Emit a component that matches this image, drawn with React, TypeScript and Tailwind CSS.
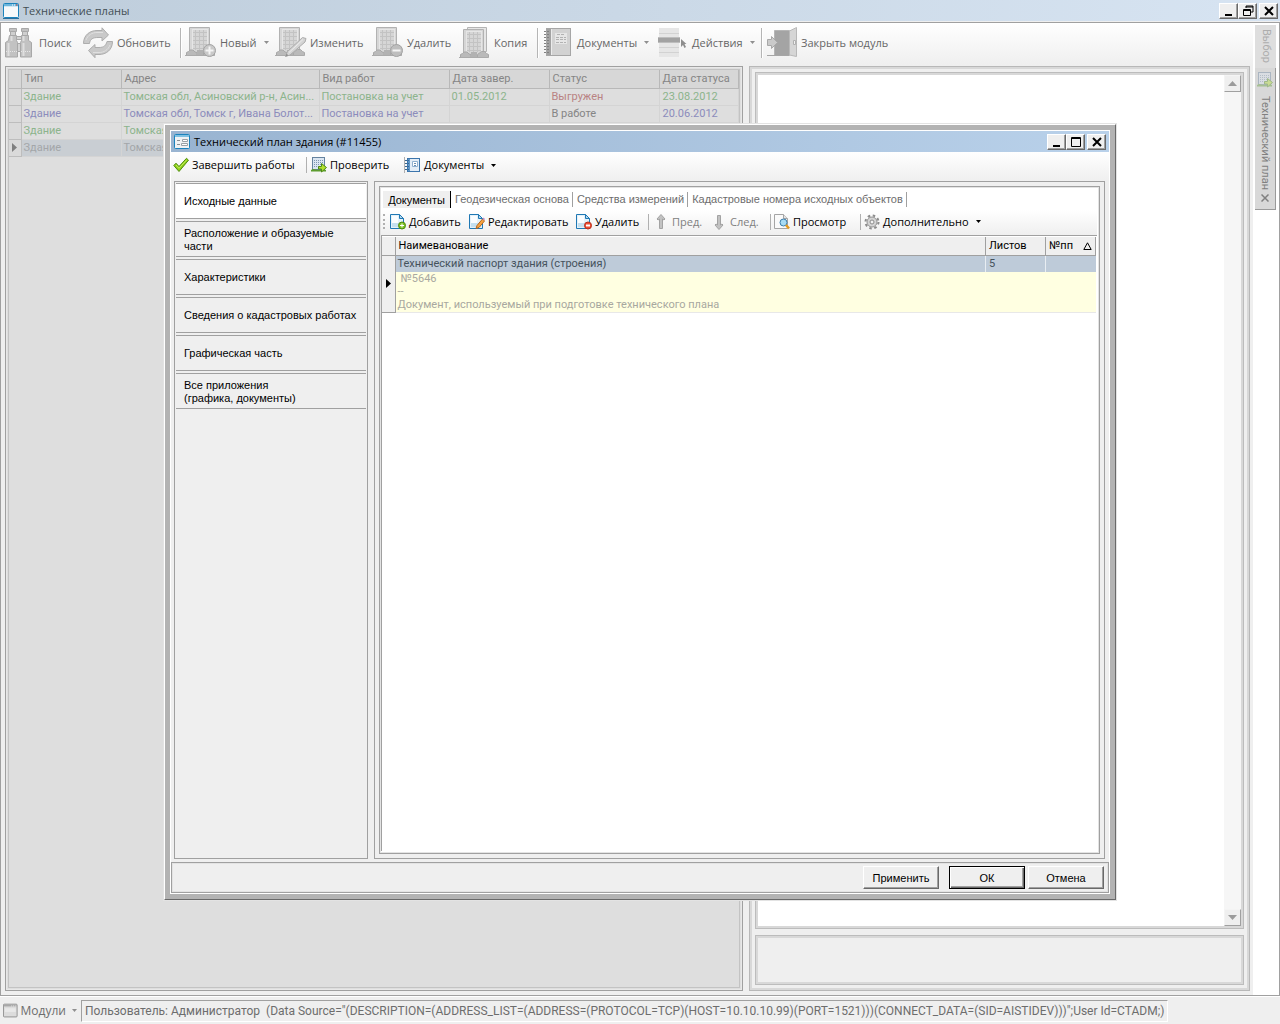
import type { ReactNode } from "react";

type Kids = { children?: ReactNode };

/* ---------- icons: main window ---------- */

const WindowIcon = () => (
  <svg width="16" height="16" viewBox="0 0 16 16" aria-hidden="true">
    <rect x="0.5" y="0.5" width="15" height="14" rx="1" fill="#f7f9fb" stroke="#1b83bd" />
    <rect x="1" y="1" width="14" height="2" fill="#6db6dc" />
    <rect x="1" y="3" width="14" height="1" fill="#cfe6f3" />
    <path d="M9 2h1M11 2h1" stroke="#fff" />
    <path d="M13 2h1.500" stroke="#d3392a" />
    <path d="M0 15.500h16" stroke="#2b6f9c" />
  </svg>
);

const FormIcon = () => (
  <svg width="16" height="16" viewBox="0 0 16 16" aria-hidden="true">
    <rect x="0.5" y="0.5" width="15" height="14" rx="1" fill="#f0f2f4" stroke="#1b83bd" />
    <rect x="1" y="1" width="14" height="2" fill="#7fc1e2" />
    <path d="M3 6.500h3M3 10.500h3" stroke="#8b8f93" />
    <path d="M8.500 5.500h5v2h-5zM7.500 9.500h6v2h-6z" fill="#fff" stroke="#9aa0a5" />
  </svg>
);

const Binoculars = () => (
  <svg width="32" height="32" viewBox="0 0 32 32" aria-hidden="true">
    <g fill="#c2c2c2" stroke="#a8a8a8">
      <path d="M5.500 1.500h7v3h-7zM17.500 1.500h7v3h-7z" />
      <path d="M6.500 4.500h5v4h-5zM18.500 4.500h5v4h-5z" fill="#cfcfcf" />
      <path d="M5.500 8.500h7v5l1 2v14.500h-12V15.500l3-2zM17.500 8.500h7v5l3 2v14.500h-11V15.500l1-2z" />
      <path d="M12.500 9.500h5v3h-5zM13.500 16.500h3v8h-3z" fill="#d2d2d2" />
    </g>
    <path d="M7.500 9v5M19.500 9v5M4.500 16v13M19.500 16v13" stroke="#dedede" strokeWidth="2" />
    <path d="M2 24.500h11M17 24.500h10" stroke="#e6e6e6" strokeDasharray="1 1" />
  </svg>
);

const Refresh = () => (
  <svg width="32" height="32" viewBox="0 0 32 32" aria-hidden="true">
    <g fill="#c9c9c9" stroke="#adadad" strokeLinejoin="round">
      <path d="M1.500 16.500C1.500 8 8 3.500 15 3.500h5V.8l6.500 7.200-6.500 6v-3.500h-4C11 10.500 8 12 7.500 16.500z" />
      <path d="M30.500 14.500C30.500 23 24 27.500 17 27.500h-4v3.200L6.500 23.500 13 17.500v3h4c5 0 7-2 8-6z" />
    </g>
    <path d="M4 13c2-5 6-7.500 11-7.500h6M28 18c-2 5-6 7.500-11 7.500h-6" fill="none" stroke="#e0e0e0" />
  </svg>
);

const Building = ({ children, dx = 0 }: Kids & { dx?: number }) => (
  <svg width="32" height="32" viewBox="0 0 32 32" aria-hidden="true">
    {dx > 0 && <path d="M8.500.5h19v24h-19z" fill="#e6e6e6" stroke="#b4b4b4" />}
    <g transform={dx > 0 ? "translate(0 2)" : undefined}>
      <path d="M4.500.5h20v27h-20z" fill="#d6d6d6" stroke="#b2b2b2" />
      <path d="M7 5.500h15M7 9.500h15M7 13.500h15M7 17.500h15M7 21.500h15M10.500 3v20M14.500 3v20M18.500 3v20" stroke="#c3c3c3" />
      <path d="M7.500 3v20M22.500 3v20M7 2.500h16" stroke="#e6e6e6" />
      <path d="M1.500 28.500v-3l2-1 1.500-1.500h3l2 2 2 .5v3z" fill="#bababa" stroke="#a8a8a8" />
      <path d="M12 23h6v5.500h-6z" fill="#b2b2b2" />
      <path d="M18.500 28.500v-3l2-1.500 2-1.500h3l2 2 2 1v3z" fill="#bababa" stroke="#a8a8a8" />
      <path d="M0 28.500h29" stroke="#ababab" />
    </g>
    {children}
  </svg>
);

const BuildingNew = () => (
  <Building>
    <circle cx="24.500" cy="23.500" r="6" fill="#c9c9c9" stroke="#a2a2a2" />
    <path d="M24.500 19.500v8M20.500 23.500h8" stroke="#f4f4f4" strokeWidth="2" />
  </Building>
);
const BuildingEdit = () => (
  <Building>
    <path d="M10.500 29.500l2-5 15-14 3.500 1-1 3.500-15 13z" fill="#d4d4d4" stroke="#acacac" />
    <path d="M14 25.500l14-13" stroke="#ebebeb" />
    <path d="M10.500 29.500l1-3 2 2z" fill="#909090" />
  </Building>
);
const BuildingDelete = () => (
  <Building>
    <circle cx="24.500" cy="23.500" r="6" fill="#bebebe" stroke="#a2a2a2" />
    <path d="M20.500 23.500h8" stroke="#f4f4f4" strokeWidth="2" />
  </Building>
);
const BuildingCopy = () => <Building dx={4} />;

const Notebook = () => (
  <svg width="32" height="32" viewBox="0 0 32 32" aria-hidden="true">
    <rect x="4.500" y="1.500" width="24" height="27" fill="#d2d2d2" stroke="#a6a6a6" />
    <path d="M5 2h4v26H5z" fill="#a2a2a2" />
    <path d="M9.500 2v26" stroke="#ebebeb" />
    <path d="M2 4.500h5M2 7.500h5M2 10.500h5M2 13.500h5M2 16.500h5M2 19.500h5M2 22.500h5M2 25.500h5" stroke="#808080" strokeDasharray="2 1" />
    <rect x="13" y="6" width="12" height="11" fill="#e6e6e6" />
    <path d="M15 7.500h8M14 10.500h10M14 12.500h10M14 15.500h10" stroke="#b2b2b2" strokeDasharray="3 1" />
  </svg>
);

const ListCursor = () => (
  <svg width="32" height="32" viewBox="0 0 32 32" aria-hidden="true">
    <path d="M2 1h20v29H2z" fill="#e6e6e6" />
    <path d="M2 6.500h20M2 20.500h20M2 25.500h20" stroke="#d2d2d2" />
    <path d="M1 10h22v6H1z" fill="#a2a2a2" />
    <path d="M1 10.500h22M1 15.500h22" stroke="#bdbdbd" />
    <path d="M24 12v8l2-2 1.500 3 1.500-1-1.500-3h2z" fill="#8e8e8e" />
  </svg>
);

const ExitDoor = () => (
  <svg width="32" height="32" viewBox="0 0 32 32" aria-hidden="true">
    <path d="M8.500 3.500h15v25h-15z" fill="#a4a4a4" stroke="#b5b5b5" />
    <path d="M23.500 4l7-3.500v29l-7-1.500z" fill="#d6d6d6" stroke="#b8b8b8" />
    <path d="M27.500 13.500h2v4h-2z" fill="#f1f1f1" stroke="#b0b0b0" />
    <path d="M1 28.500h22" stroke="#a6a6a6" />
    <path d="M1.500 12.500h4V9.500l6 6-6 6v-3h-4z" fill="#cacaca" stroke="#a8a8a8" />
  </svg>
);

/* ---------- icons: dialog ---------- */

const Check = () => (
  <svg width="16" height="16" viewBox="0 0 16 16" aria-hidden="true">
    <path d="M.8 8.500L3 6.200l3 3.300 7.500-8.200 2 1.900L6 14.500z" fill="#8fd017" stroke="#4f8c10" strokeLinejoin="round" />
    <path d="M3 8l3 3.300 7.500-8.200" fill="none" stroke="#c4ee5b" />
  </svg>
);

const CheckPlan = ({ muted = false }: { muted?: boolean }) => (
  <svg width="16" height="16" viewBox="0 0 16 16" className={muted ? "opacity-40" : ""} aria-hidden="true">
    <rect x="1.500" y="0.500" width="12" height="12" fill="#dbe6f2" stroke="#66839f" />
    <path d="M3 3.500h9M3 5.500h9M3 7.500h9M3 9.500h9" stroke="#7d95b0" strokeDasharray="1 1" />
    <path d="M0 14.500h15v-1.500l-3-1-3 1-4-.5-3-.5-2 1z" fill="#5d9c2f" />
    <path d="M7.500 9.500h3V6.500l5 4-5 4.500v-3h-3z" fill="#b3e02e" stroke="#4c8a18" />
  </svg>
);

const BlueNotebook = () => (
  <svg width="16" height="16" viewBox="0 0 16 16" aria-hidden="true">
    <rect x="2.500" y="1.500" width="12" height="13" fill="#e3edf7" stroke="#3c75ac" />
    <path d="M3 2h2v12H3z" fill="#5e97c9" />
    <path d="M0 3.500h4M0 6.500h4M0 9.500h4M0 12.500h4" stroke="#3a678f" strokeDasharray="2 1" />
    <path d="M7.500 4.500h5v5h-5z" fill="#fff" stroke="#8fb0d0" />
    <path d="M9 6.500h2M9 8.500h2" stroke="#6b8fb4" />
  </svg>
);

const Page = ({ children }: Kids) => (
  <svg width="16" height="16" viewBox="0 0 16 16" aria-hidden="true">
    <path d="M.5.5h9l4 4v10H.5z" fill="#e4f1f9" stroke="#1f78b4" />
    <path d="M2 2h6v11H2z" fill="#fafdff" />
    <path d="M2 9h10v4H2z" fill="#c4e0f0" />
    <path d="M9.500.5v4h4z" fill="#b3d7ee" stroke="#1f78b4" strokeLinejoin="round" />
    {children}
  </svg>
);
const PageAdd = () => (
  <Page>
    <circle cx="12" cy="11.500" r="3.500" fill="#7cc120" stroke="#4b8a0e" />
    <path d="M12 9.500v4M10 11.500h4" stroke="#fff" />
  </Page>
);
const PageEdit = () => (
  <Page>
    <path d="M7 14.500l1-3L13.500 5l2 2L10 13.500z" fill="#f6a440" stroke="#b5651d" />
    <path d="M13.500 5l1-1.500 1.500 1.500-1 1.500z" fill="#c08ac0" />
  </Page>
);
const PageDelete = () => (
  <Page>
    <circle cx="12" cy="11.500" r="3.500" fill="#ee4b32" stroke="#b5301c" />
    <path d="M10 11.500h4" stroke="#fff" strokeWidth="2" />
  </Page>
);
const Preview = () => (
  <svg width="16" height="16" viewBox="0 0 16 16" aria-hidden="true">
    <path d="M.5.5h9l4 4v10H.5z" fill="#fafafa" stroke="#a5a5a5" />
    <path d="M9.500.5v4h4" fill="#e5e5e5" stroke="#a5a5a5" />
    <circle cx="9.500" cy="8.500" r="3.500" fill="#a8dcf4" stroke="#3c7fae" />
    <path d="M12 11l3 3.500" stroke="#e39a1f" strokeWidth="2.500" />
  </svg>
);
const Arrow = ({ down = false }: { down?: boolean }) => (
  <svg width="16" height="16" viewBox="0 0 16 16" className={down ? "rotate-180" : ""} aria-hidden="true">
    <path d="M8 .5l4 4.500-1 1-1.500-1v9.500h-3V5L5 6 4 5z" fill="#c2c2c2" stroke="#a3a3a3" strokeLinejoin="round" />
  </svg>
);
const Gear = () => (
  <svg width="16" height="16" viewBox="0 0 16 16" aria-hidden="true">
    <circle cx="8" cy="8" r="6.500" fill="none" stroke="#8c8c8c" strokeWidth="2" strokeDasharray="2.500 2.600" />
    <circle cx="8" cy="8" r="5" fill="#d4d4d4" stroke="#949494" />
    <circle cx="8" cy="8" r="2" fill="#f3f3f3" stroke="#8c8c8c" />
  </svg>
);
const ModulesIcon = () => (
  <svg width="16" height="16" viewBox="0 0 16 16" aria-hidden="true">
    <rect x="0.500" y="0.500" width="15" height="14" rx="1" fill="#dcdcdc" stroke="#8e8e8e" />
    <rect x="1" y="1" width="14" height="2" fill="#a9a9a9" />
    <path d="M9 2.500h5" stroke="#e8e8e8" strokeDasharray="1 1" />
    <path d="M2 5h12v4H2z" fill="#e9e9e9" />
  </svg>
);

/* ---------- small controls ---------- */

const Caret = ({ className = "text-[#8f8f8f]" }: { className?: string }) => (
  <svg width="5" height="3" viewBox="0 0 5 3" className={className} aria-hidden="true">
    <path d="M0 0h5L2.500 3z" fill="currentColor" />
  </svg>
);

const WinButton = ({ label, children }: Kids & { label: string }) => (
  <button
    aria-label={label}
    className="flex h-4 w-[19px] items-center justify-center border border-t-white border-l-white border-r-[#696969] border-b-[#696969] bg-[#efefef] shadow-[inset_-1px_-1px_0_#a0a0a0]"
  >
    <svg width="12" height="12" viewBox="0 0 12 12" aria-hidden="true">
      {children}
    </svg>
  </button>
);

const Minimize = () => (
  <WinButton label="Свернуть">
    <path d="M2 9h7v2H2z" />
  </WinButton>
);
const Close = () => (
  <WinButton label="Закрыть">
    <path d="M2 2l8 8M10 2l-8 8" stroke="#000" strokeWidth="2" />
  </WinButton>
);

const Sep = () => <div className="mr-1 h-[30px] w-px shrink-0 bg-[#b5b5b5] shadow-[1px_0_0_#fff]" />;
const SmallSep = () => <div className="h-4 w-px shrink-0 bg-[#b0b0b0]" />;

const BigTool = ({ icon, label, width, menu }: { icon: ReactNode; label: string; width: string; menu?: boolean }) => (
  <button className={`flex shrink-0 items-center gap-[3px] whitespace-nowrap ${width}`}>
    {icon}
    <span>{label}</span>
    {menu && (
      <span className="ml-1">
        <Caret />
      </span>
    )}
  </button>
);

const Tool = ({ icon, label, width, menu, disabled }: { icon: ReactNode; label: string; width: string; menu?: boolean; disabled?: boolean }) => (
  <button
    disabled={disabled}
    className={`flex shrink-0 items-center gap-[3px] whitespace-nowrap disabled:text-[#808080] ${width}`}
  >
    {icon}
    <span>{label}</span>
    {menu && (
      <span className="ml-1">
        <Caret className="text-black" />
      </span>
    )}
  </button>
);

/* ---------- data ---------- */

const plans = [
  { type: "Здание", addr: "Томская обл, Асиновский р-н, Асин...", work: "Постановка на учет", done: "01.05.2012", status: "Выгружен", date: "23.08.2012", tone: "text-[#8cb48c]", statusTone: "text-[#b98383]" },
  { type: "Здание", addr: "Томская обл, Томск г, Ивана Болот...", work: "Постановка на учет", done: "", status: "В работе", date: "20.06.2012", tone: "text-[#8c8cbc]", statusTone: "text-[#858585]" },
  { type: "Здание", addr: "Томская", work: "", done: "", status: "", date: "", tone: "text-[#8cb48c]", statusTone: "text-[#858585]" },
  { type: "Здание", addr: "Томская", work: "", done: "", status: "", date: "", tone: "text-[#a3a6a9]", statusTone: "text-[#858585]", current: true },
];
const planColumns = ["Тип", "Адрес", "Вид работ", "Дата завер.", "Статус", "Дата статуса"];

const sections = [
  "Исходные данные",
  "Расположение и образуемые\nчасти",
  "Характеристики",
  "Сведения о кадастровых работах",
  "Графическая часть",
  "Все приложения\n(графика, документы)",
];
const tabs = ["Геодезическая основа", "Средства измерений", "Кадастровые номера исходных объектов"];

/* ---------- main window parts ---------- */

const MainToolbar = () => (
  <div role="toolbar" aria-label="Главная панель" className="flex h-[42px] shrink-0 items-center overflow-hidden bg-linear-to-b from-white to-[#efefef] pb-[3px] pl-[3px] text-[#666]">
    <BigTool icon={<Binoculars />} label="Поиск" width="w-[78px]" />
    <BigTool icon={<Refresh />} label="Обновить" width="w-[98px]" />
    <Sep />
    <BigTool icon={<BuildingNew />} label="Новый" width="w-[90px]" menu />
    <BigTool icon={<BuildingEdit />} label="Изменить" width="w-[97px]" />
    <BigTool icon={<BuildingDelete />} label="Удалить" width="w-[87px]" />
    <BigTool icon={<BuildingCopy />} label="Копия" width="w-[78px]" />
    <Sep />
    <BigTool icon={<Notebook />} label="Документы" width="w-[115px]" menu />
    <BigTool icon={<ListCursor />} label="Действия" width="w-[104px]" menu />
    <Sep />
    <BigTool icon={<ExitDoor />} label="Закрыть модуль" width="w-[130px]" />
  </div>
);

const PlansTable = () => (
  <section className="min-w-0 flex-[733_1_0] overflow-hidden border border-[#a0a0a0] bg-[#dedede] p-[2px] shadow-[inset_0_0_0_1px_#e8e8e8]">
    <div className="h-full border border-[#c3c3c3]">
      <table className="w-full table-fixed border-collapse text-left font-[Roboto] text-[11px] leading-[15px]">
        <colgroup>
          <col className="w-[12px]" />
          <col className="w-[100px]" />
          <col className="w-[198px]" />
          <col className="w-[130px]" />
          <col className="w-[100px]" />
          <col className="w-[110px]" />
          <col />
        </colgroup>
        <thead className="text-[#858585]">
          <tr className="h-[18px] bg-[#d7d7d7]">
            <th className="border-r border-b border-[#b8b8b8]" />
            {planColumns.map((c) => (
              <th key={c} className="truncate border-r border-b border-[#b8b8b8] pl-[3px] font-normal">
                {c}
              </th>
            ))}
          </tr>
        </thead>
        <tbody>
          {plans.map((p, i) => (
            <tr key={i} className={`h-[17px] ${p.tone} ${p.current ? "bg-[#c9ced3]" : ""}`}>
              <td className="border-r border-b border-[#bdbdbd] bg-[#dadada]">
                {p.current && (
                  <svg width="5" height="9" viewBox="0 0 5 9" className="mx-auto" aria-hidden="true">
                    <path d="M0 0l5 4.500L0 9z" fill="#808080" />
                  </svg>
                )}
              </td>
              {[p.type, p.addr, p.work, p.done].map((v, k) => (
                <td key={k} className="overflow-hidden border-r border-b border-[#d4d4d4] pl-[2px] whitespace-nowrap">
                  {v}
                </td>
              ))}
              <td className={`border-r border-b border-[#d4d4d4] pl-[2px] ${p.statusTone}`}>{p.status}</td>
              <td className="border-r border-b border-[#d4d4d4] pl-[3px]">{p.date}</td>
            </tr>
          ))}
        </tbody>
      </table>
    </div>
  </section>
);

const ScrollButton = ({ down = false }: { down?: boolean }) => (
  <button
    aria-label={down ? "Вниз" : "Вверх"}
    className="flex h-[17px] w-[17px] items-center justify-center border border-t-[#f4f4f4] border-l-[#f4f4f4] border-r-[#a0a0a0] border-b-[#a0a0a0] bg-[#efefef]"
  >
    <svg width="9" height="5" viewBox="0 0 9 5" className={down ? "rotate-180" : ""} aria-hidden="true">
      <path d="M0 5l4.500-5L9 5z" fill="#9b9b9b" />
    </svg>
  </button>
);

const DetailsPane = () => (
  <section className="flex min-w-0 flex-[490_1_0] flex-col gap-[6px] border border-[#b8b8b8] p-[5px] shadow-[inset_0_0_0_2px_#d8d8d8]">
    <div className="flex min-h-0 flex-1 border border-[#bcbcbc] bg-white p-[2px] shadow-[inset_0_0_0_2px_#d8d8d8]">
      <textarea aria-label="Описание" readOnly className="min-w-0 flex-1 resize-none outline-none" />
      <div className="flex w-[17px] flex-col justify-between bg-[#f6f6f6]">
        <ScrollButton />
        <ScrollButton down />
      </div>
    </div>
    <div className="h-[50px] shrink-0 border border-[#bcbcbc] bg-[#efefef] shadow-[inset_0_0_0_2px_#d8d8d8]" />
  </section>
);

const SideTabs = () => (
  <nav aria-label="Окна" className="w-[26px] shrink-0 bg-white pt-[2px] pl-[2px] font-[Roboto] text-[11px]">
    <div className="flex w-[21px] flex-col">
      <button className="h-[43px] bg-[#dedede] pt-1 text-left text-[#adadad] [writing-mode:vertical-rl]">Выбор</button>
      <div className="flex h-[142px] flex-col items-center border-r border-b border-[#9a9a9a] bg-[#d8d8d8] pt-1 text-[#808080]">
        <CheckPlan muted />
        <button className="mt-2 h-[94px] text-left whitespace-nowrap [writing-mode:vertical-rl]">Технический план</button>
        <button aria-label="Закрыть вкладку" className="mt-1">
          <svg width="8" height="8" viewBox="0 0 8 8" aria-hidden="true">
            <path d="M.5.5l7 7M7.500.5l-7 7" stroke="#808080" strokeWidth="1.500" />
          </svg>
        </button>
      </div>
    </div>
  </nav>
);

/* ---------- dialog ---------- */

const DialogButton = ({ children, primary = false }: Kids & { primary?: boolean }) => (
  <button
    className={`flex h-[23px] w-[76px] items-center justify-center border bg-[#efefef] ${
      primary
        ? "border-black shadow-[inset_1px_1px_0_#fff,inset_-1px_-1px_0_#696969,inset_-2px_-2px_0_#a0a0a0]"
        : "border-t-white border-l-white border-r-[#696969] border-b-[#696969] shadow-[inset_-1px_-1px_0_#a0a0a0]"
    }`}
  >
    {children}
  </button>
);

const DocumentsPane = () => (
  <div className="flex min-h-0 flex-1 flex-col border border-[#a0a0a0] bg-white p-px pr-[2px] pb-[2px] shadow-[inset_0_0_0_1px_#e3e3e3]">
    <div role="tablist" className="flex h-[22px] shrink-0 items-center pt-px pl-[2px] font-['Liberation_Sans'] text-[#6d6d6d]">
      <button role="tab" aria-selected="true" className="h-[17px] w-[68px] shrink-0 border-r border-black bg-[#efefef] text-black">
        Документы
      </button>
      {tabs.map((t) => (
        <button key={t} role="tab" aria-selected="false" className="h-[15px] border-r border-[#a0a0a0] pr-[3px] pl-1 leading-[15px] whitespace-nowrap">
          {t}
        </button>
      ))}
    </div>
    <div role="toolbar" aria-label="Документы" className="flex h-[25px] shrink-0 items-center bg-linear-to-b from-white to-[#efefef] pb-[2px] pl-[2px]">
      <div className="mr-[5px] h-[15px] w-[2px] border-l-2 border-dotted border-[#b0b0b0]" />
      <Tool icon={<PageAdd />} label="Добавить" width="w-[79px]" />
      <Tool icon={<PageEdit />} label="Редактировать" width="w-[107px]" />
      <Tool icon={<PageDelete />} label="Удалить" width="w-[72px]" />
      <SmallSep />
      <Tool icon={<Arrow />} label="Пред." width="w-[62px] pl-1" disabled />
      <Tool icon={<Arrow down />} label="След." width="w-[59px]" disabled />
      <SmallSep />
      <Tool icon={<Preview />} label="Просмотр" width="w-[89px] pl-[3px]" />
      <SmallSep />
      <Tool icon={<Gear />} label="Дополнительно" width="w-[130px] pl-[3px]" menu />
    </div>
    <div className="min-h-0 flex-1 border-t border-l border-[#a0a0a0] pt-px pr-px">
      <table className="w-full table-fixed border-collapse text-left font-[Roboto]">
        <colgroup>
          <col className="w-[13px]" />
          <col />
          <col className="w-[60px]" />
          <col className="w-[50px]" />
        </colgroup>
        <thead>
          <tr className="h-[18px] bg-[#efefef]">
            <th className="border-r border-b border-[#a0a0a0]" />
            <th className="border-r border-b border-[#a0a0a0] px-[3px] font-normal">Наимеванование</th>
            <th className="border-r border-b border-[#a0a0a0] px-[3px] font-normal">Листов</th>
            <th className="border-r border-b border-[#a0a0a0] px-[3px] font-normal">
              <span className="flex items-center justify-between">
                №пп
                <svg width="9" height="8" viewBox="0 0 9 8" aria-hidden="true">
                  <path d="M.8 7.500L4.500.8l3.700 6.700z" fill="none" stroke="#000" />
                </svg>
              </span>
            </th>
          </tr>
        </thead>
        <tbody>
          <tr className="h-[17px] bg-[#becbd9] text-[#45525c]">
            <td rowSpan={2} className="border-r border-b border-[#a0a0a0] bg-[#efefef]">
              <svg width="5" height="9" viewBox="0 0 5 9" className="mx-auto" aria-hidden="true">
                <path d="M0 0l5 4.500L0 9z" />
              </svg>
            </td>
            <td className="border-r border-[#e8edf2] px-[2px]">Технический паспорт здания (строения)</td>
            <td className="border-r border-[#e8edf2] px-[3px]">5</td>
            <td />
          </tr>
          <tr className="bg-[#ffffe1] text-[#a8a8a0]">
            <td colSpan={3} className="h-[40px] border-b border-[#e8e8e8] px-[2px] align-top leading-[13px]">
              <p className="pl-[3px]">№5646</p>
              <p>--</p>
              <p>Документ, используемый при подготовке технического плана</p>
            </td>
          </tr>
        </tbody>
      </table>
    </div>
  </div>
);

const PlanDialog = () => (
  <div
    role="dialog"
    aria-label="Технический план здания (#11455)"
    className="absolute inset-x-[164px] inset-y-[124px] flex flex-col border border-t-white border-l-white border-r-[#696969] border-b-[#696969] bg-[#b3b3b3] p-[5px] text-[11px] text-black shadow-[0_0_0_1px_#e3e3e3]"
  >
    <div className="flex min-h-0 flex-1 flex-col border border-white bg-[#efefef]">
      <header className="flex h-[21px] shrink-0 items-center gap-1 bg-linear-to-r from-[#99b4d1] to-[#b9d1ea] pr-[3px] pl-[3px]">
        <FormIcon />
        <h2 className="flex-1">Технический план здания (#11455)</h2>
        <div className="flex">
          <Minimize />
          <WinButton label="Развернуть">
            <path d="M1.500 1.500h9v9h-9zM1 2.500h10" fill="none" stroke="#000" />
          </WinButton>
          <div className="w-[2px]" />
          <Close />
        </div>
      </header>
      <div role="toolbar" aria-label="Технический план" className="flex h-[29px] shrink-0 items-center bg-linear-to-b from-white to-[#efefef] pb-[3px] pl-[2px]">
        <Tool icon={<Check />} label="Завершить работы" width="w-[133px]" />
        <SmallSep />
        <Tool icon={<CheckPlan />} label="Проверить" width="w-[97px] pl-1" />
        <SmallSep />
        <Tool icon={<BlueNotebook />} label="Документы" width="w-[100px]" menu />
      </div>
      <div className="flex min-h-0 flex-1 gap-[6px] pr-1 pl-[3px]">
        <nav aria-label="Разделы" className="flex w-[194px] shrink-0 flex-col gap-[2px] border border-[#a0a0a0] p-px font-['Liberation_Sans'] leading-[13px]">
          {sections.map((s, i) => (
            <button
              key={s}
              className={`flex h-9 items-center border-y border-[#a0a0a0] pt-px pl-2 text-left whitespace-pre-line ${i === 0 ? "bg-white" : ""}`}
            >
              {s}
            </button>
          ))}
        </nav>
        <div className="flex min-w-0 flex-1 flex-col border border-[#a0a0a0] p-1">
          <DocumentsPane />
        </div>
      </div>
      <footer className="mt-[3px] flex h-[31px] shrink-0 items-center justify-end border border-[#a0a0a0] pr-1 font-['Liberation_Sans'] shadow-[inset_0_0_0_1px_#e3e3e3]">
        <DialogButton>Применить</DialogButton>
        <div className="w-[10px]" />
        <DialogButton primary>ОК</DialogButton>
        <div className="w-[3px]" />
        <DialogButton>Отмена</DialogButton>
      </footer>
    </div>
  </div>
);

export default function App() {
  return (
    <main className="relative flex h-screen flex-col overflow-hidden bg-[#efefef] font-['Open_Sans',sans-serif] text-[11px] leading-4">
      <header className="flex h-[21px] shrink-0 items-center gap-1 bg-linear-to-r from-[#becddb] to-[#d7e4f2] pr-[2px] pl-[3px] text-[#434e54]">
        <WindowIcon />
        <h1 className="flex-1">Технические планы</h1>
        <div className="flex">
          <Minimize />
          <WinButton label="Восстановить">
            <path d="M4 1h7v6H9M4 1v2M4 2h7M1.500 4.500h7v6h-7zM1 5.500h8" fill="none" stroke="#000" />
          </WinButton>
          <div className="w-[2px]" />
          <Close />
        </div>
      </header>
      <div className="mt-px flex min-h-0 flex-1 border border-[#a0a0a0] shadow-[inset_0_1px_0_#e3e3e3]">
        <div className="flex min-w-0 flex-1 flex-col">
          <MainToolbar />
          <div className="flex min-h-0 flex-1 gap-[6px] pt-px pr-[3px] pb-1 pl-1">
            <PlansTable />
            <DetailsPane />
          </div>
        </div>
        <SideTabs />
      </div>
      <footer className="flex h-7 shrink-0 items-center gap-1 border-t border-white pl-[3px] text-[#6d6d6d]">
        <button className="flex w-[74px] shrink-0 items-center gap-[3px]">
          <ModulesIcon />
          <span className="text-xs">Модули</span>
          <span className="ml-[3px]">
            <Caret />
          </span>
        </button>
        <p className="h-[22px] truncate border border-t-[#a0a0a0] border-l-[#a0a0a0] border-r-white border-b-white px-[3px] font-[Roboto] text-xs leading-5 whitespace-pre">
          {
            'Пользователь: Администратор  (Data Source="(DESCRIPTION=(ADDRESS_LIST=(ADDRESS=(PROTOCOL=TCP)(HOST=10.10.10.99)(PORT=1521)))(CONNECT_DATA=(SID=AISTIDEV)))";User Id=CTADM;)'
          }
        </p>
      </footer>
      <PlanDialog />
    </main>
  );
}
